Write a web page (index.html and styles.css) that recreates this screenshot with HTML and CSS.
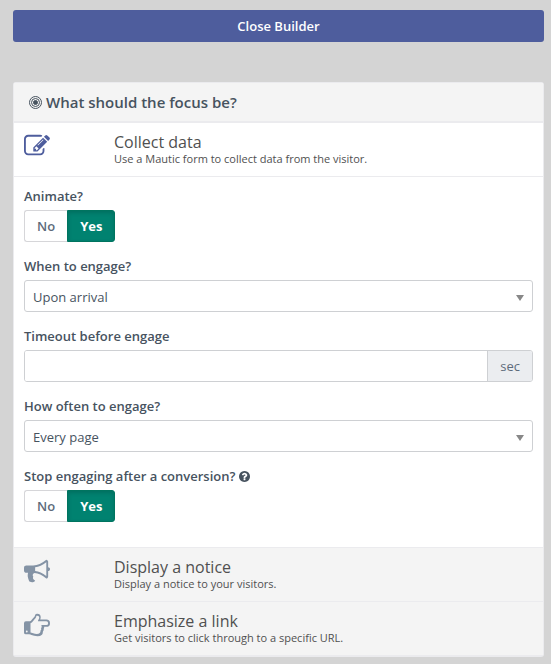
FILE: index.html
```html
<!DOCTYPE html>
<html lang="en">
<head>
<meta charset="utf-8">
<meta name="viewport" content="width=device-width, initial-scale=1">
<title>Focus Builder</title>
<link rel="stylesheet" href="styles.css">
</head>
<body>
<button type="button" class="close-builder">Close Builder</button>

<main class="panel">
  <h1 class="panel-heading">
    <svg class="icon-target" viewBox="0 0 26 26" aria-hidden="true"><circle cx="13" cy="13" r="12"/><circle cx="13" cy="13" r="8"/><circle class="dot" cx="13" cy="13" r="4"/></svg>
    What should the focus be?
  </h1>

  <a href="#collect" class="option option-active">
    <svg class="option-icon" viewBox="0 0 1792 1792" aria-hidden="true"><path d="M888 1184l116-116-152-152-116 116v56h96v96h56zm440-720q-16-16-33 1l-350 350q-17 17-1 33t33-1l350-350q17-17 1-33zm80 594v190q0 119-84.500 203.500t-203.500 84.500h-832q-119 0-203.500-84.500t-84.500-203.500v-832q0-119 84.500-203.500t203.500-84.500h832q63 0 117 25 15 7 18 23 3 17-9 29l-49 49q-14 14-32 8-23-6-45-6h-832q-66 0-113 47t-47 113v832q0 66 47 113t113 47h832q66 0 113-47t47-113v-126q0-13 9-22l64-64q15-15 35-7t20 29zm-96-738l288 288-672 672h-288v-288zm444 132l-92 92-288-288 92-92q28-28 68-28t68 28l152 152q28 28 28 68t-28 68z"/></svg>
    <span class="option-text">
      <span class="option-title">Collect data</span>
      <span class="option-note">Use a Mautic form to collect data from the visitor.</span>
    </span>
  </a>

  <form class="settings" id="collect">
    <fieldset class="field">
      <legend class="field-label">Animate?</legend>
      <div class="toggle">
        <label><input type="radio" name="animate" value="0"><span>No</span></label>
        <label><input type="radio" name="animate" value="1" checked><span>Yes</span></label>
      </div>
    </fieldset>

    <div class="field">
      <label class="field-label" for="when">When to engage?</label>
      <div class="select">
        <select id="when"><option>Upon arrival</option></select>
        <svg class="caret" viewBox="0 0 8 6" aria-hidden="true"><path d="M0 0h8L4 6z"/></svg>
      </div>
    </div>

    <div class="field">
      <label class="field-label" for="timeout">Timeout before engage</label>
      <div class="input-group">
        <input type="text" id="timeout">
        <span class="addon">sec</span>
      </div>
    </div>

    <div class="field">
      <label class="field-label" for="frequency">How often to engage?</label>
      <div class="select">
        <select id="frequency"><option>Every page</option></select>
        <svg class="caret" viewBox="0 0 8 6" aria-hidden="true"><path d="M0 0h8L4 6z"/></svg>
      </div>
    </div>

    <fieldset class="field">
      <legend class="field-label">Stop engaging after a conversion?
        <svg class="icon-help" viewBox="128 128 1536 1536" aria-hidden="true"><path d="M1024 1376v-192q0-14-9-23t-23-9h-192q-14 0-23 9t-9 23v192q0 14 9 23t23 9h192q14 0 23-9t9-23zm256-672q0-88-55.500-163t-138.500-116-170-41q-243 0-371 213-15 24 8 42l132 100q7 6 19 6 16 0 25-12 53-68 86-92 34-24 86-24 48 0 85.500 26t37.500 59q0 38-20 61t-68 45q-63 28-115.500 86.500t-52.500 125.500v36q0 14 9 23t23 9h192q14 0 23-9t9-23q0-19 21.500-49.500t54.500-49.500q32-18 49-28.500t46-35 44.500-48 28-60.500 12.500-81zm384 192q0 209-103 385.500t-279.500 279.500-385.500 103-385.500-103-279.500-279.500-103-385.500 103-385.500 279.500-279.500 385.500-103 385.500 103 279.500 279.500 103 385.500z"/></svg>
      </legend>
      <div class="toggle">
        <label><input type="radio" name="stop" value="0"><span>No</span></label>
        <label><input type="radio" name="stop" value="1" checked><span>Yes</span></label>
      </div>
    </fieldset>
  </form>

  <a href="#notice" class="option">
    <svg class="option-icon" viewBox="0 0 1792 1792" aria-hidden="true"><path d="M1664 640q53 0 90.500 37.500t37.500 90.500-37.500 90.500-90.500 37.500v384q0 52-38 90t-90 38q-417-347-812-380-58 19-91 66t-31 100.500 40 92.500q-20 33-23 65.500t6 58 33.500 55 48 50 61.500 50.500q-29 58-111.500 83t-168.500 11.500-132-55.500q-7-23-29.500-87.500t-32-94.500-23-89-15-101 3.500-98.500 22-110.500h-122q-66 0-113-47t-47-113v-192q0-66 47-113t113-47h480q435 0 896-384 52 0 90 38t38 90v384zm-128 604v-954q-394 302-768 343v270q377 42 768 341z"/></svg>
    <span class="option-text">
      <span class="option-title">Display a notice</span>
      <span class="option-note">Display a notice to your visitors.</span>
    </span>
  </a>

  <a href="#link" class="option">
    <svg class="option-icon" viewBox="0 0 1792 1792" aria-hidden="true"><path fill-rule="evenodd" d="M0 768q0-128 128-128h288q50 0 160-150q90-110 140-160q30-35 45-110q22-92 159-92q210 0 232 220q0 80-32 164h416q256 0 256 256t-256 256h-144q10 70-30 130q15 110-55 188q0 322-375 322q-250 0-420-80q-70-48-160-48H128Q0 1536 0 1408zM192 1280a64 64 0 1 0 0 128a64 64 0 1 0 0-128zM448 768v640q60 0 180 50q130 50 250 50q280 0 260-230q80-50 40-165q75-65 20-217h338q128 0 128-128t-128-128H960q0-50 35-110q60-90 55-170q-20-110-190-95q-25 115-70 165q-60 60-130 155q-130 183-212 183z"/></svg>
    <span class="option-text">
      <span class="option-title">Emphasize a link</span>
      <span class="option-note">Get visitors to click through to a specific URL.</span>
    </span>
  </a>
</main>
</body>
</html>
```

FILE: styles.css
```css
* {
  box-sizing: border-box;
}

body {
  margin: 0;
  padding: 10px 7px 7px 13px;
  background: #d4d4d4;
  color: #47535f;
  font: 13px/20px "Open Sans", "Noto Sans", sans-serif;
}

button,
input,
select {
  font: inherit;
  color: inherit;
}

.close-builder {
  display: block;
  width: 100%;
  height: 32px;
  padding: 0;
  border: 0;
  border-radius: 3px;
  background: #4e5d9d;
  color: #fff;
  font-weight: 600;
}

.panel {
  margin-top: 40px;
  border: 1px solid #ebebee;
  border-bottom-width: 2px;
  border-radius: 3px;
  background: #fff;
}

.panel-heading {
  display: flex;
  align-items: center;
  gap: 4px;
  height: 40px;
  margin: 0;
  padding: 0 15px;
  border-bottom: 2px solid #ebebee;
  background: #f4f4f4;
  font-size: 15px;
  font-weight: 600;
}

.icon-target {
  width: 13px;
  height: 13px;
  fill: none;
  stroke: #47535f;
  stroke-width: 2;
}

.icon-target .dot {
  fill: #47535f;
}

.option {
  display: flex;
  height: 54px;
  padding: 10px;
  border-top: 1px solid #ebebee;
  background: #f4f4f4;
  color: #505050;
  text-decoration: none;
}

.option-active {
  border-top: 0;
  border-bottom: 1px solid #ebebee;
  background: #fff;
}

.option-icon {
  width: 26px;
  height: 26px;
  margin-right: 64px;
  flex: none;
  fill: #8493a5;
}

.option-active .option-icon {
  fill: #4e5d9d;
}

.option-text {
  display: flex;
  flex-direction: column;
}

.option-title {
  font-size: 16px;
  line-height: 18px;
}

.option-note {
  font-size: 11px;
  line-height: 16px;
}

.settings {
  padding: 10px 10px 25px;
}

.field {
  min-width: 0;
  margin: 0 0 15px;
  padding: 0;
  border: 0;
}

.field:last-child {
  margin-bottom: 0;
}

.field-label {
  display: block;
  height: 23px;
  padding: 0;
  font-weight: 600;
  line-height: 18px;
}

.icon-help {
  width: 11px;
  height: 11px;
  vertical-align: -1px;
  fill: #47535f;
}

.toggle {
  display: flex;
}

.toggle input {
  position: absolute;
  opacity: 0;
}

.toggle span {
  display: block;
  height: 32px;
  padding: 5px 12px;
  border: 1px solid #d6d6d9;
  border-right: 0;
  border-radius: 3px 0 0 3px;
  color: #5d6b7b;
  font-weight: 600;
}

.toggle label:last-child span {
  border-right: 1px solid #d6d6d9;
  border-radius: 0 3px 3px 0;
}

.toggle label input:checked + span {
  border-color: #00745f;
  background: #008270;
  box-shadow: inset 0 2px 4px rgba(0, 0, 0, 0.15);
  color: #fff;
  font-weight: 700;
}

.select {
  position: relative;
}

.select select {
  display: block;
  width: 100%;
  height: 32px;
  padding: 2px 8px 0;
  border: 1px solid #ced0d3;
  border-radius: 3px;
  background: #fff;
  appearance: none;
}

.caret {
  position: absolute;
  top: 15px;
  right: 9px;
  width: 8px;
  height: 6px;
  fill: #888;
  pointer-events: none;
}

.input-group {
  display: flex;
  height: 32px;
  border: 1px solid #ced0d3;
  border-radius: 3px;
  overflow: hidden;
}

.input-group input {
  flex: 1;
  min-width: 0;
  padding: 0 8px;
  border: 0;
  background: #fff;
}

.addon {
  padding: 5px 12px;
  border-left: 1px solid #ced0d3;
  background: #ebedf0;
  color: #5d6b7b;
}
```
